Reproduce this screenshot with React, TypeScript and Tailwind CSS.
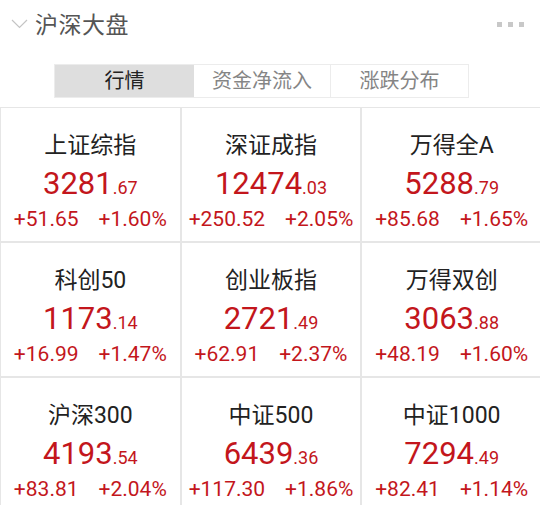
import React from "react";

const items = [
  { name: "上证综指", int: "3281", dec: "67", chg: "+51.65", pct: "+1.60%" },
  { name: "深证成指", int: "12474", dec: "03", chg: "+250.52", pct: "+2.05%" },
  { name: "万得全A", int: "5288", dec: "79", chg: "+85.68", pct: "+1.65%" },
  { name: "科创50", int: "1173", dec: "14", chg: "+16.99", pct: "+1.47%" },
  { name: "创业板指", int: "2721", dec: "49", chg: "+62.91", pct: "+2.37%" },
  { name: "万得双创", int: "3063", dec: "88", chg: "+48.19", pct: "+1.60%" },
  { name: "沪深300", int: "4193", dec: "54", chg: "+83.81", pct: "+2.04%" },
  { name: "中证500", int: "6439", dec: "36", chg: "+117.30", pct: "+1.86%" },
  { name: "中证1000", int: "7294", dec: "49", chg: "+82.41", pct: "+1.14%" },
];

const tabs = ["行情", "资金净流入", "涨跌分布"];

export default function App() {
  return (
    <div className="w-[540px] h-[505px] overflow-hidden bg-white font-['Roboto','Noto_Sans_CJK_SC',sans-serif]">
      {/* Header */}
      <div className="flex items-center justify-between h-[50px] pl-[11px] pr-[16px]">
        <div className="flex items-center gap-[7px]">
          <svg width="17" height="10" viewBox="0 0 17 10" className="mt-[-2px]">
            <path d="M1 1 L8.5 8.5 L16 1" fill="none" stroke="#c4c4c4" strokeWidth="1.2" />
          </svg>
          <span className="text-[23px] leading-none text-[#555] tracking-[0.5px]">沪深大盘</span>
        </div>
        <div className="flex gap-[6px] mt-[-2px]">
          <span className="w-[5px] h-[5px] bg-[#c8c8c8]" />
          <span className="w-[5px] h-[5px] bg-[#c8c8c8]" />
          <span className="w-[5px] h-[5px] bg-[#c8c8c8]" />
        </div>
      </div>

      {/* Tabs */}
      <div className="flex ml-[54px] mt-[14px] w-[415px] h-[34px] border border-[#ececec]">
        {tabs.map((t, i) => (
          <div
            key={t}
            className={
              i === 0
                ? "w-[139px] flex items-center justify-center bg-[#dedede] text-[#222] text-[20px]"
                : i === 1
                ? "w-[137px] flex items-center justify-center border-r border-[#ececec] text-[#858585] text-[20px]"
                : "flex-1 flex items-center justify-center text-[#858585] text-[20px]"
            }
          >
            {t}
          </div>
        ))}
      </div>

      {/* Grid */}
      <div className="grid grid-cols-3 mt-[9px] w-[542px]">
        {items.map((it) => (
          <div
            key={it.name}
            className="h-[135px] border border-[#e6e6e6] flex flex-col items-center"
          >
            <div className="mt-[23px] h-[30px] leading-[30px] text-[23px] text-[#222]">{it.name}</div>
            <div className="mt-[4px] h-[38px] leading-[38px] text-[#c3161c]">
              <span className="text-[31px]">{it.int}</span>
              <span className="text-[18px]">.{it.dec}</span>
            </div>
            <div className="mt-[3px] h-[26px] leading-[26px] flex justify-center gap-[20px] text-[21px] text-[#c3161c]">
              <span>{it.chg}</span>
              <span>{it.pct}</span>
            </div>
          </div>
        ))}
      </div>
    </div>
  );
}
